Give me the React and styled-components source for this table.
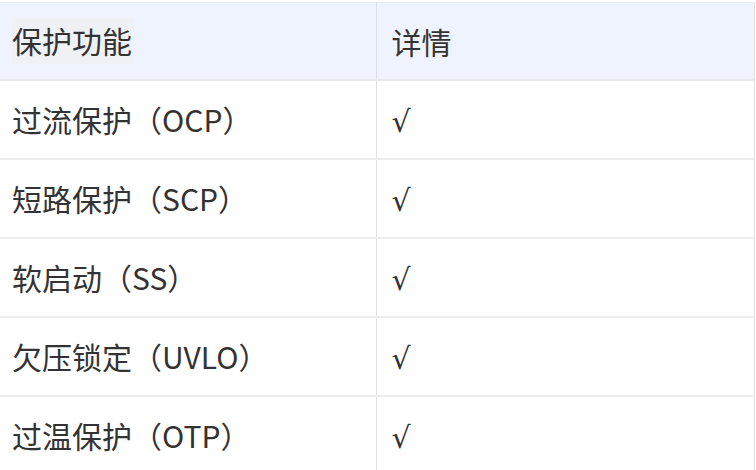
import styled, { createGlobalStyle } from "styled-components";

const GlobalStyle = createGlobalStyle`
  body {
    margin: 0;
    background: #ffffff;
    font-family: "Noto Sans CJK SC", "Noto Sans", sans-serif;
    color: #333333;
  }
`;

const rows = [
  { name: "过流保护（OCP）", detail: "√" },
  { name: "短路保护（SCP）", detail: "√" },
  { name: "软启动（SS）", detail: "√" },
  { name: "欠压锁定（UVLO）", detail: "√" },
  { name: "过温保护（OTP）", detail: "√" },
];

export default function App() {
  return (
    <>
      <GlobalStyle />
      <Wrapper>
        <Table>
          <thead>
            <HeadRow>
              <HeadCell>
                <Mark>保护功能</Mark>
              </HeadCell>
              <HeadCell $second>详情</HeadCell>
            </HeadRow>
          </thead>
          <tbody>
            {rows.map((r) => (
              <Row key={r.name}>
                <Cell>{r.name}</Cell>
                <Cell $second>
                  <Check>{r.detail}</Check>
                </Cell>
              </Row>
            ))}
          </tbody>
        </Table>
      </Wrapper>
    </>
  );
}

const Wrapper = styled.div`
  width: 756px;
  height: 470px;
  overflow: hidden;
  padding-top: 2px;
  box-sizing: border-box;
`;

const Table = styled.table`
  width: 754px;
  border-collapse: collapse;
  table-layout: fixed;
  border-top: 1px solid #e8ebf3;
  border-right: 1px solid #e2e2e2;
`;

const HeadRow = styled.tr`
  height: 77px;
  background: #eff3fd;
  border-bottom: 2px solid #e6e8ee;
`;

const Row = styled.tr`
  height: 79px;
  border-bottom: 2px solid #ececec;
`;

const HeadCell = styled.th`
  box-sizing: border-box;
  width: ${(p) => (p.$second ? "378px" : "376px")};
  padding: 0 0 0 ${(p) => (p.$second ? "15px" : "12px")};
  text-align: left;
  font-weight: 400;
  font-size: 30px;
  color: #333333;
  vertical-align: middle;
  border-left: ${(p) => (p.$second ? "1px solid #dde0e8" : "none")};
`;

const Mark = styled.span`
  display: inline-block;
  background: #f0f1f5;
  line-height: 47px;
  padding-right: 2px;
`;

const Cell = styled.td`
  box-sizing: border-box;
  padding: 0 0 0 ${(p) => (p.$second ? "15px" : "12px")};
  font-size: 30px;
  color: #333333;
  vertical-align: middle;
  border-left: ${(p) => (p.$second ? "1px solid #e0e0e0" : "none")};
`;

const Check = styled.span`
  font-family: "DejaVu Sans", sans-serif;
  font-size: 30px;
`;
